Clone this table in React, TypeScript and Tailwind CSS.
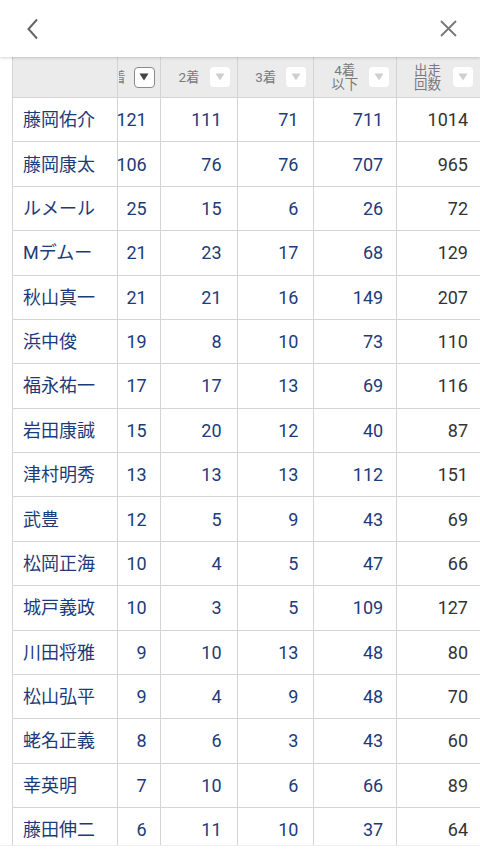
import React from "react";

const rows: [string, number, number, number, number, number][] = [
  ["藤岡佑介", 121, 111, 71, 711, 1014],
  ["藤岡康太", 106, 76, 76, 707, 965],
  ["ルメール", 25, 15, 6, 26, 72],
  ["Mデムー", 21, 23, 17, 68, 129],
  ["秋山真一", 21, 21, 16, 149, 207],
  ["浜中俊", 19, 8, 10, 73, 110],
  ["福永祐一", 17, 17, 13, 69, 116],
  ["岩田康誠", 15, 20, 12, 40, 87],
  ["津村明秀", 13, 13, 13, 112, 151],
  ["武豊", 12, 5, 9, 43, 69],
  ["松岡正海", 10, 4, 5, 47, 66],
  ["城戸義政", 10, 3, 5, 109, 127],
  ["川田将雅", 9, 10, 13, 48, 80],
  ["松山弘平", 9, 4, 9, 48, 70],
  ["蛯名正義", 8, 6, 3, 43, 60],
  ["幸英明", 7, 10, 6, 66, 89],
  ["藤田伸二", 6, 11, 10, 37, 64],
];

function SortButton({ active }: { active?: boolean }) {
  return (
    <div
      className={`shrink-0 flex items-center justify-center rounded-[4px] bg-white ${
        active ? "w-[21px] h-[21px] border border-[#8a8a8a]" : "w-[20px] h-[20px]"
      }`}
    >
      <svg width="10" height="8" viewBox="0 0 10 8">
        <path d="M0.5 0.5 H9.5 L5 7.5 Z" fill={active ? "#444" : "#cfcfcf"} />
      </svg>
    </div>
  );
}

export default function App() {
  return (
    <div
      className="w-[480px] h-[854px] overflow-hidden flex flex-col bg-white"
      style={{ fontFamily: "Roboto, 'Noto Sans CJK JP', sans-serif" }}
    >
      {/* Top bar */}
      <div className="h-[57px] shrink-0 flex items-center justify-between px-[26px] bg-white shadow-[0_1px_3px_rgba(0,0,0,0.18)] z-10">
        <svg width="14" height="22" viewBox="0 0 14 22">
          <path d="M11 1.5 L2.5 11 L11 20.5" stroke="#666" strokeWidth="2" fill="none" />
        </svg>
        <svg width="17" height="17" viewBox="0 0 17 17" className="mr-[-3px]">
          <path d="M1 1 L16 16 M16 1 L1 16" stroke="#777" strokeWidth="1.8" fill="none" />
        </svg>
      </div>

      {/* Table */}
      <div className="flex-1 overflow-hidden pl-[12px]">
        <div className="border-l-[1.5px] border-[#d4d4d4] w-[468px]">
          {/* header */}
          <div className="flex h-[41px] bg-[#ebebeb] border-b border-[#d4d4d4] text-[13.5px] text-[#7a7a7a] leading-[14px]">
            <div className="w-[105px] border-r border-[#d4d4d4]" />
            <div className="w-[43px] border-r border-[#d4d4d4] flex items-center justify-end pr-[5px] gap-[8px] overflow-hidden">
              <div className="w-[7px] overflow-hidden flex justify-end shrink-0">
                <span className="shrink-0">1着</span>
              </div>
              <SortButton active />
            </div>
            <div className="w-[77px] border-r border-[#d4d4d4] flex items-center justify-end pr-[7px] gap-[10px]">
              <span>2着</span>
              <SortButton />
            </div>
            <div className="w-[77px] border-r border-[#d4d4d4] flex items-center justify-end pr-[7px] gap-[10px]">
              <span>3着</span>
              <SortButton />
            </div>
            <div className="w-[83px] border-r border-[#d4d4d4] flex items-center justify-end pr-[7px] gap-[11px]">
              <div className="flex flex-col items-center">
                <span>4着</span>
                <span>以下</span>
              </div>
              <SortButton />
            </div>
            <div className="w-[83px] flex items-center justify-end pr-[7px] gap-[12px]">
              <div className="flex flex-col items-center">
                <span>出走</span>
                <span>回数</span>
              </div>
              <SortButton />
            </div>
          </div>

          {/* body */}
          {rows.map((r) => (
            <div
              key={r[0]}
              className="flex h-[44.375px] border-b border-[#d4d4d4] text-[18px] text-[#1c3b7a]"
            >
              <div className="w-[105px] border-r border-[#d4d4d4] flex items-center pl-[10px]">
                {r[0]}
              </div>
              <div className="w-[43px] border-r border-[#d4d4d4] flex items-center justify-end pr-[13px]">
                {r[1]}
              </div>
              <div className="w-[77px] border-r border-[#d4d4d4] flex items-center justify-end pr-[15px]">
                {r[2]}
              </div>
              <div className="w-[77px] border-r border-[#d4d4d4] flex items-center justify-end pr-[15px]">
                {r[3]}
              </div>
              <div className="w-[83px] border-r border-[#d4d4d4] flex items-center justify-end pr-[13px]">
                {r[4]}
              </div>
              <div className="w-[83px] flex items-center justify-end pr-[12px] text-[#333]">
                {r[5]}
              </div>
            </div>
          ))}
        </div>
      </div>

      {/* bottom strip */}
      <div className="h-[9px] shrink-0 bg-white border-t border-[#efefef]" />
    </div>
  );
}
